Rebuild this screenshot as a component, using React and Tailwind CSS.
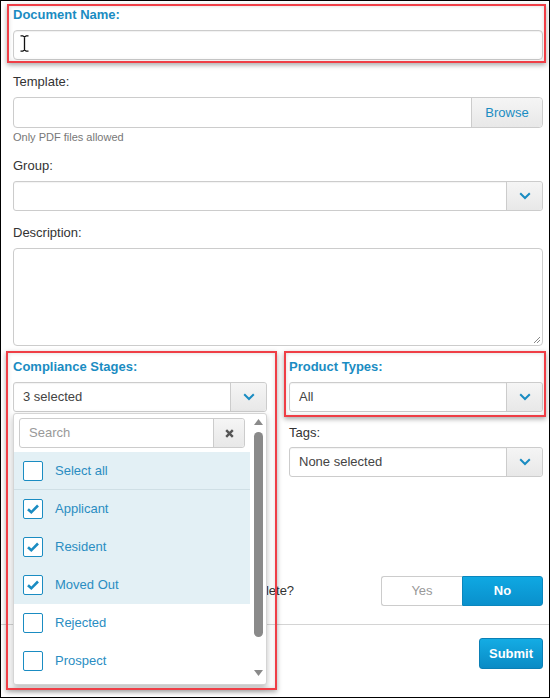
import React from "react";

const Chevron = () => (
  <svg width="12" height="8" viewBox="0 0 12 8">
    <path d="M1.2 1.2 L6 6 L10.8 1.2" fill="none" stroke="#1a8cc2" strokeWidth="2" />
  </svg>
);

const SelectBox = ({ text }) => (
  <div className="flex h-[30px] rounded-[3px] border border-[#cccccc] bg-white shadow-[inset_0_1px_1px_rgba(0,0,0,0.05)]">
    <div className="flex flex-1 items-center pl-[9px] text-[13px] text-[#444]">{text}</div>
    <div className="flex w-[36px] items-center justify-center rounded-r-[3px] border-l border-[#cccccc] bg-gradient-to-b from-[#f5f5f5] to-[#e8e8e8]">
      <Chevron />
    </div>
  </div>
);

const CheckBox = ({ checked }) => (
  <div className="flex h-[20px] w-[20px] items-center justify-center rounded-[2px] border-[1.5px] border-[#1a8cc2] bg-white">
    {checked && (
      <svg width="14" height="12" viewBox="0 0 14 12">
        <path d="M2 6.2 L5.3 9.3 L12 2.5" fill="none" stroke="#1a8cc2" strokeWidth="2.6" />
      </svg>
    )}
  </div>
);

const Item = ({ label, checked, hl, sep }) => (
  <div
    className={`flex h-[38px] items-center gap-[12px] pl-[9px] ${hl ? "bg-[#e3f0f5]" : "bg-white"} ${sep ? "border-b border-[#cfdfe5]" : ""}`}
  >
    <CheckBox checked={checked} />
    <span className="text-[13px] text-[#2a8dc2]">{label}</span>
  </div>
);

const Label = ({ children, bold }) => (
  <div
    className={`mb-[7px] h-[16px] text-[13px] leading-[16px] ${bold ? "font-bold text-[#1a8cc2]" : "text-[#333]"}`}
  >
    {children}
  </div>
);

export default function App() {
  return (
    <div className="relative h-[698px] w-[550px] overflow-hidden border border-black bg-white font-['Liberation_Sans',Arial,sans-serif]">
      <div className="pl-[12px] pr-[6px] pt-[6px]">
        {/* Document Name */}
        <div className="mb-[14px]">
          <Label bold>Document Name:</Label>
          <div className="relative h-[30px] rounded-[4px] border border-[#cccccc] shadow-[inset_0_1px_1px_rgba(0,0,0,0.06)]">
            <svg className="absolute left-[6px] top-[4px]" width="9" height="17" viewBox="0 0 9 17">
              <path d="M0.5 0.8 H3.2 M5.8 0.8 H8.5 M4.5 1.5 V15.5 M0.5 16.2 H3.2 M5.8 16.2 H8.5 M3 1 L4.5 2 L6 1 M3 16 L4.5 15 L6 16" fill="none" stroke="#111" strokeWidth="1.3" />
            </svg>
          </div>
        </div>

        {/* Template */}
        <div className="mb-[14px]">
          <Label>Template:</Label>
          <div className="flex h-[31px] rounded-[4px] border border-[#cccccc]">
            <div className="flex-1" />
            <div className="flex w-[71px] items-center justify-center rounded-r-[4px] border-l border-[#cccccc] bg-gradient-to-b from-[#f5f5f5] to-[#e8e8e8] text-[13px] text-[#1a8cc2]">
              Browse
            </div>
          </div>
          <div className="mt-[3px] h-[13px] text-[11px] leading-[13px] text-[#777]">Only PDF files allowed</div>
        </div>

        {/* Group */}
        <div className="mb-[14px]">
          <Label>Group:</Label>
          <SelectBox text="" />
        </div>

        {/* Description */}
        <div className="mb-[13px]">
          <Label>Description:</Label>
          <div className="relative h-[98px] rounded-[4px] border border-[#cccccc]">
            <svg className="absolute bottom-[1px] right-[1px]" width="8" height="8" viewBox="0 0 8 8">
              <path d="M7 1 L1 7 M7 4 L4 7" stroke="#888" strokeWidth="1" />
            </svg>
          </div>
        </div>

        {/* Two columns */}
        <div className="grid grid-cols-[254px_254px] gap-x-[22px]">
          <div className="relative">
            <Label bold>Compliance Stages:</Label>
            <SelectBox text="3 selected" />
            {/* dropdown */}
            <div className="absolute left-0 top-[54px] z-20 flex h-[272px] w-[254px] rounded-[3px] border border-[#d5d5d5] bg-white shadow-[0_3px_6px_rgba(0,0,0,0.25)]">
              <div className="flex w-[237px] flex-col">
                <div className="px-[5px] pb-[4px] pt-[4px]">
                  <div className="flex h-[30px] rounded-[3px] border border-[#cccccc]">
                    <div className="flex flex-1 items-center pl-[9px] text-[13px] text-[#999]">Search</div>
                    <div className="flex w-[31px] items-center justify-center rounded-r-[3px] border-l border-[#cccccc] bg-gradient-to-b from-[#f5f5f5] to-[#e8e8e8]">
                      <svg width="9" height="9" viewBox="0 0 9 9">
                        <path d="M1.2 1.2 L7.8 7.8 M7.8 1.2 L1.2 7.8" stroke="#555" strokeWidth="2.4" />
                      </svg>
                    </div>
                  </div>
                </div>
                <Item label="Select all" hl sep />
                <Item label="Applicant" checked hl />
                <Item label="Resident" checked hl />
                <Item label="Moved Out" checked hl />
                <Item label="Rejected" />
                <Item label="Prospect" />
              </div>
              <div className="flex w-[16px] flex-col items-center pt-[5px]">
                <svg width="9" height="6" viewBox="0 0 9 6">
                  <path d="M4.5 0 L9 6 L0 6 Z" fill="#8a8a8a" />
                </svg>
                <div className="mt-[7px] h-[205px] w-[9px] rounded-full bg-[#8a8a8a]" />
                <div className="flex-1" />
                <svg className="mb-[8px]" width="9" height="6" viewBox="0 0 9 6">
                  <path d="M0 0 L9 0 L4.5 6 Z" fill="#8a8a8a" />
                </svg>
              </div>
            </div>
          </div>
          <div>
            <Label bold>Product Types:</Label>
            <SelectBox text="All" />
            <div className="mt-[13px]">
              <div className="mb-[6px] h-[16px] text-[13px] leading-[16px] text-[#333]">Tags:</div>
              <SelectBox text="None selected" />
            </div>
          </div>
        </div>

        {/* Question row */}
        <div className="mt-[99px] flex items-center justify-between">
          <div className="whitespace-nowrap text-[13px] text-[#333]">Is this document required for file to be complete?</div>
          <div className="flex h-[30px] w-[162px]">
            <div className="flex w-[81px] items-center justify-center rounded-l-[3px] border border-r-0 border-[#cccccc] bg-white text-[13px] text-[#999]">
              Yes
            </div>
            <div className="flex w-[81px] items-center justify-center rounded-r-[3px] border border-[#0a86bd] bg-gradient-to-b from-[#0fa8e2] to-[#0a90cc] text-[13px] font-bold text-white">
              No
            </div>
          </div>
        </div>
      </div>

      <div className="mt-[18px] h-px w-full bg-[#d4d4d4]" />

      <div className="flex justify-end pr-[6px] pt-[13px]">
        <div className="flex h-[31px] w-[64px] items-center justify-center rounded-[3px] border border-[#0a7fb5] bg-gradient-to-b from-[#14ace4] to-[#0a8bc5] text-[13px] font-bold text-white">
          Submit
        </div>
      </div>

      {/* annotation boxes */}
      <div className="pointer-events-none absolute left-[6px] top-[3px] h-[59px] w-[539px] border-2 border-[#ef3e46] shadow-[0_2px_5px_rgba(0,0,0,0.35),inset_0_0_4px_rgba(0,0,0,0.15)]" />
      <div className="pointer-events-none absolute left-[5px] top-[350px] z-30 h-[339px] w-[271px] border-2 border-[#ef3e46] shadow-[0_2px_5px_rgba(0,0,0,0.35),inset_0_0_4px_rgba(0,0,0,0.15)]" />
      <div className="pointer-events-none absolute left-[283px] top-[350px] h-[66px] w-[262px] border-2 border-[#ef3e46] shadow-[0_2px_5px_rgba(0,0,0,0.35),inset_0_0_4px_rgba(0,0,0,0.15)]" />
    </div>
  );
}
